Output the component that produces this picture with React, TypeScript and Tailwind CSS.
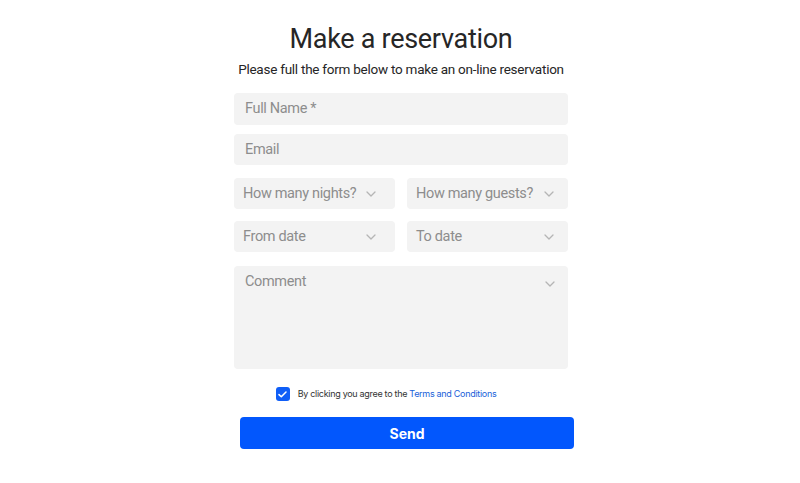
import React from "react";

const Chevron = () => (
  <svg width="10" height="6" viewBox="0 0 10 6" fill="none" className="shrink-0">
    <path d="M1 1l4 4 4-4" stroke="#b5b5b5" strokeWidth="1.3" strokeLinecap="round" strokeLinejoin="round" />
  </svg>
);

const Select = ({ label, right }: { label: string; right?: boolean }) => (
  <div
    className={
      right
        ? "flex h-[31px] w-[161px] shrink-0 items-center justify-between whitespace-nowrap rounded-[4px] bg-[#f3f3f3] pl-[9px] pr-[14px] text-[14.5px] tracking-[-0.35px] text-[#8d8d8d]"
        : "flex h-[31px] w-[161px] shrink-0 items-center justify-between whitespace-nowrap rounded-[4px] bg-[#f3f3f3] pl-[9px] pr-[19px] text-[14.5px] tracking-[-0.35px] text-[#8d8d8d]"
    }
  >
    <span>{label}</span>
    <Chevron />
  </div>
);

export default function App() {
  return (
    <div
      className="flex min-h-[483px] w-full flex-col items-center bg-white pl-[2px]"
      style={{ fontFamily: "Roboto, 'Noto Sans', sans-serif" }}
    >
      <div className="flex w-[334px] flex-col pt-[22px]">
        <h1 className="whitespace-nowrap text-center text-[27px] leading-[34px] tracking-[-0.3px] text-[#262626]">
          Make a reservation
        </h1>
        <p className="mt-[3px] whitespace-nowrap text-center text-[13.5px] leading-[20px] tracking-[-0.25px] text-[#262626]">
          Please full the form below to make an on-line reservation
        </p>
        <div className="mt-[14px] flex h-[32px] items-center whitespace-nowrap rounded-[4px] bg-[#f3f3f3] px-[11px] text-[14.5px] tracking-[-0.35px] text-[#8d8d8d]">
          Full Name *
        </div>
        <div className="mt-[9px] flex h-[31px] items-center whitespace-nowrap rounded-[4px] bg-[#f3f3f3] px-[11px] text-[14.5px] tracking-[-0.35px] text-[#8d8d8d]">
          Email
        </div>
        <div className="mt-[13px] flex justify-between">
          <Select label="How many nights?" />
          <Select label="How many guests?" right />
        </div>
        <div className="mt-[12px] flex justify-between">
          <Select label="From date" />
          <Select label="To date" right />
        </div>
        <div className="mt-[14px] flex h-[103px] items-start justify-between rounded-[4px] bg-[#f3f3f3] pl-[11px] pr-[13px] pt-[5px] text-[14.5px] tracking-[-0.35px] text-[#8d8d8d]">
          <span>Comment</span>
          <span className="pt-[10px]">
            <Chevron />
          </span>
        </div>
        <div className="mt-[18px] flex items-center justify-center gap-[8px] pr-[30px]">
          <span className="flex h-[14px] w-[14px] items-center justify-center rounded-[3px] bg-[#0f5ef7]">
            <svg width="9" height="7" viewBox="0 0 9 7" fill="none">
              <path d="M1 3.6l2.3 2.2L8 1" stroke="white" strokeWidth="1.5" strokeLinecap="round" strokeLinejoin="round" />
            </svg>
          </span>
          <span
            className="whitespace-nowrap text-[9px] tracking-[-0.3px] text-[#333]"
            style={{ fontFamily: "Inter, sans-serif" }}
          >
            By clicking you agree to the <span className="text-[#1a5fd9]">Terms and Conditions</span>
          </span>
        </div>
        <button
          className="ml-[6px] mt-[16px] h-[32px] w-[334px] rounded-[4px] bg-[#0257fd] text-[14px] font-bold text-white"
          style={{ fontFamily: "Inter, sans-serif" }}
        >
          Send
        </button>
      </div>
    </div>
  );
}
